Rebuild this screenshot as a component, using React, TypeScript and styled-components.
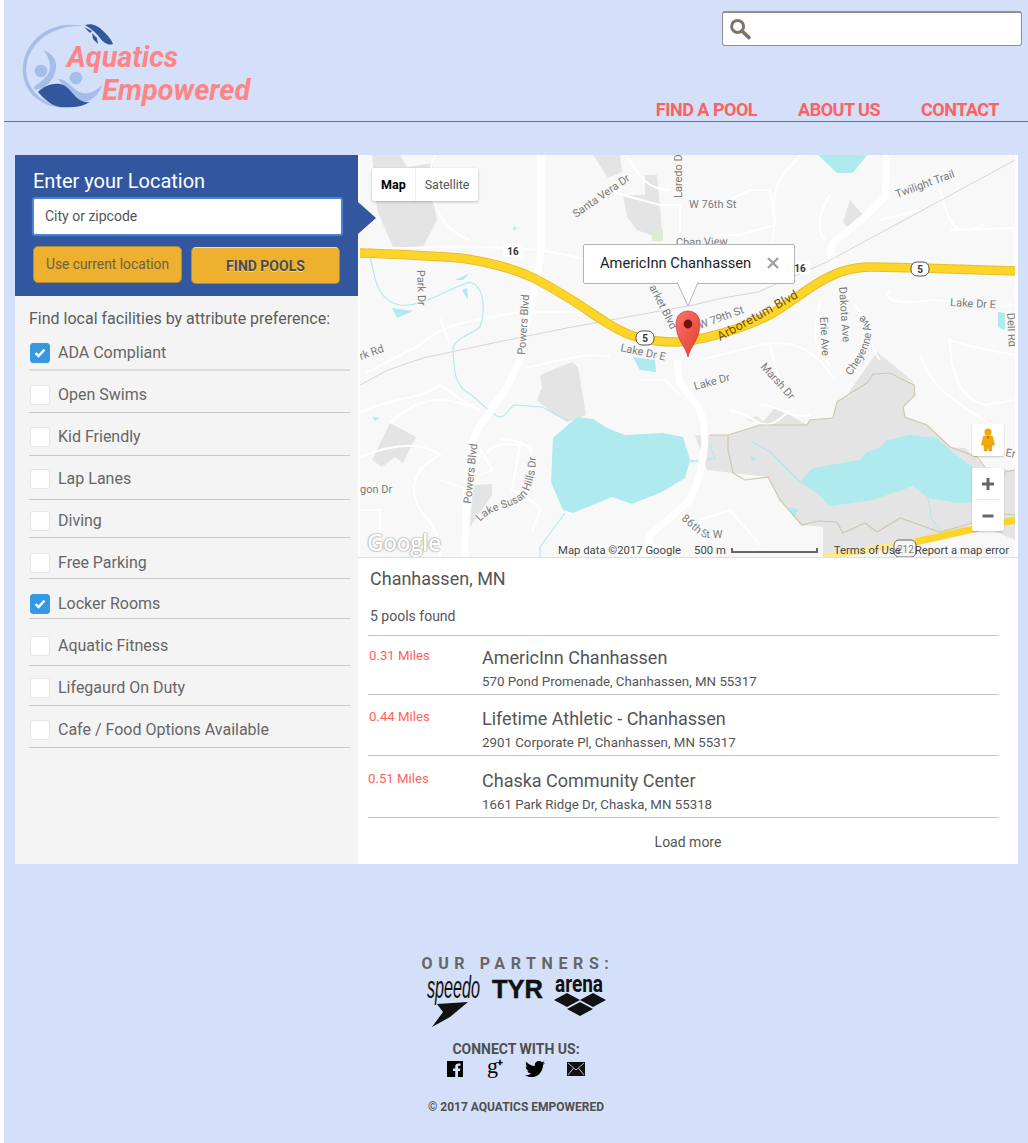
import styled, { createGlobalStyle } from 'styled-components';
import { FaTwitter } from 'react-icons/fa';

const GlobalStyle = createGlobalStyle`
  html, body {
    margin: 0;
    padding: 0;
    background: #fff;
    font-family: Roboto, "Liberation Sans", sans-serif;
  }
  * { box-sizing: border-box; }
`;

const Page = styled.div`
  margin-left: 4px;
  height: 1143px;
  overflow: hidden;
  background: #d4e0f9;
`;

const Header = styled.header`
  height: 122px;
  display: flex;
  justify-content: space-between;
  border-bottom: 1px solid #5673b4;
`;

const LogoBox = styled.svg`
  display: block;
  width: 240px;
  height: 90px;
  margin: 20px 0 0 14px;
`;

const LogoText = styled.text`
  font-family: Roboto, sans-serif;
  font-weight: 700;
  font-style: italic;
  font-size: 28.9px;
  fill: #ff8585;
`;

const HeaderRight = styled.div`
  display: flex;
  flex-direction: column;
  align-items: flex-end;
  padding: 11px 6px 0 0;
`;

const SearchBox = styled.div`
  width: 300px;
  height: 35px;
  display: flex;
  align-items: center;
  padding-left: 6px;
  background: #fff;
  border: 1px solid #8f8f8f;
  border-top-width: 2px;
  border-radius: 3px;
`;

const Nav = styled.nav`
  display: flex;
  gap: 41px;
  margin: auto 23px 0 0;
  padding-bottom: 1px;
`;

const NavLink = styled.a`
  font-size: 18px;
  line-height: 21px;
  font-weight: 700;
  letter-spacing: -0.5px;
  color: #ff6160;
`;

const Main = styled.main`
  height: 709px;
  margin: 33px 10px 0 11px;
  display: grid;
  grid-template-columns: 343px 1fr;
`;

const Sidebar = styled.aside`
  display: flex;
  flex-direction: column;
  background: #f4f4f4;
`;

const LocationPanel = styled.div`
  position: relative;
  z-index: 2;
  height: 141px;
  padding: 14px 16px 0 18px;
  background: #32579e;

  &::after {
    content: '';
    position: absolute;
    left: 343px;
    top: 47px;
    border-left: 18px solid #32579e;
    border-top: 16px solid transparent;
    border-bottom: 16px solid transparent;
  }
`;

const PanelTitle = styled.div`
  font-size: 20px;
  line-height: 24px;
  color: #fff;
`;

const CityInput = styled.div`
  height: 37px;
  margin-top: 5px;
  padding: 0 0 2px 11px;
  display: flex;
  align-items: center;
  background: #fff;
  border: 1px solid #4b86d8;
  border-radius: 2px;
  box-shadow: 0 0 1px 1px rgba(90, 150, 235, 0.7);
  font-size: 14px;
  color: #555;
`;

const ButtonRow = styled.div`
  display: flex;
  gap: 9px;
  margin-top: 11px;
`;

const GoldButton = styled.button<{ $primary?: boolean }>`
  width: 149px;
  height: 37px;
  padding: 0 0 ${(p) => (p.$primary ? 0 : 2)}px;
  margin-top: ${(p) => (p.$primary ? 1 : 0)}px;
  font-family: inherit;
  background: #edb02f;
  border: 1px solid #b28a3c;
  border-top-color: ${(p) => (p.$primary ? '#f5dca0' : '#b28a3c')};
  border-radius: 5px;
  font-size: ${(p) => (p.$primary ? 14 : 13.8)}px;
  font-weight: ${(p) => (p.$primary ? 700 : 400)};
  color: ${(p) => (p.$primary ? '#4b4b4b' : '#6e6040')};
  text-shadow: ${(p) => (p.$primary ? '0 1px 0 rgba(255,255,255,.5)' : 'none')};
`;

const FilterPanel = styled.div`
  padding: 12px 8px 0 14px;
`;

const FilterHeading = styled.div`
  font-size: 16px;
  line-height: 21px;
  color: #5c5c5c;
`;

const FilterRow = styled.label<{ $height: number; $top: number; $heavy?: boolean }>`
  display: flex;
  align-items: flex-start;
  gap: 8px;
  height: ${(p) => p.$height}px;
  padding: ${(p) => p.$top}px 0 0 1px;
  border-bottom: ${(p) => (p.$heavy ? '2px solid #dcdcdc' : '1px solid #c9c9c9')};
  font-size: 16px;
  line-height: 20px;
  color: #666;
`;

const Check = styled.span<{ $on?: boolean }>`
  flex: none;
  width: 20px;
  height: 20px;
  display: flex;
  align-items: center;
  justify-content: center;
  background: ${(p) => (p.$on ? '#3498e3' : '#fff')};
  border: 1px solid ${(p) => (p.$on ? '#3498e3' : '#e6e6e6')};
  border-radius: 3px;
`;

const Content = styled.section`
  display: flex;
  flex-direction: column;
  background: #fff;
`;

const MapFrame = styled.div`
  position: relative;
  height: 403px;
  padding-left: 2px;
  border-bottom: 1px solid #d4e0f9;
  overflow: hidden;
`;

const MapArt = styled.svg`
  display: block;
  width: 655px;
  height: 402px;
`;

const MapLabel = styled.text<{ $size?: number; $dark?: boolean; $bold?: boolean }>`
  font-family: Roboto, sans-serif;
  font-size: ${(p) => p.$size ?? 11}px;
  font-weight: ${(p) => (p.$bold ? 700 : 400)};
  fill: ${(p) => (p.$dark ? '#7a5200' : p.$bold ? '#333' : '#7b7b7b')};
  paint-order: stroke;
  stroke: ${(p) => (p.$dark || p.$bold ? 'transparent' : '#f8f8f8')};
  stroke-width: 2px;
`;

const MapTypeControl = styled.div`
  position: absolute;
  left: 14px;
  top: 13px;
  height: 33px;
  display: flex;
  background: #fff;
  border-radius: 2px;
  box-shadow: 0 1px 3px rgba(0, 0, 0, 0.25);
`;

const MapTypeButton = styled.div<{ $active?: boolean }>`
  display: flex;
  align-items: center;
  padding: 0 9px;
  font-size: 12.5px;
  font-weight: ${(p) => (p.$active ? 700 : 400)};
  color: ${(p) => (p.$active ? '#000' : '#555')};
  border-right: ${(p) => (p.$active ? '1px solid #eee' : 'none')};
`;

const InfoWindow = styled.div`
  position: absolute;
  left: 225px;
  top: 89px;
  width: 212px;
  height: 40px;
  display: flex;
  align-items: center;
  justify-content: space-between;
  padding: 0 15px 3px 16px;
  background: #fff;
  border: 1px solid #b4b4b4;
  border-radius: 2px;
  font-size: 14.7px;
  color: #222;
`;

const InfoTail = styled.svg`
  position: absolute;
  left: 92px;
  top: 37px;
  width: 24px;
  height: 26px;
`;

const Pin = styled.svg`
  position: absolute;
  left: 317px;
  top: 155px;
  width: 26px;
  height: 48px;
`;

const MapTile = styled.div<{ $top: number; $height: number }>`
  position: absolute;
  left: 614px;
  top: ${(p) => p.$top}px;
  width: 32px;
  height: ${(p) => p.$height}px;
  display: flex;
  flex-direction: column;
  align-items: center;
  justify-content: center;
  background: #fff;
  border-radius: 2px;
  box-shadow: 0 1px 2px rgba(0, 0, 0, 0.2);
`;

const ZoomButton = styled.div<{ $divider?: boolean }>`
  flex: 1;
  align-self: stretch;
  margin: 0 5px;
  display: flex;
  align-items: center;
  justify-content: center;
  border-bottom: ${(p) => (p.$divider ? '1px solid #e6e6e6' : 'none')};
`;

const GoogleMark = styled.div`
  position: absolute;
  left: 9px;
  bottom: 0;
  font-family: "Open Sans", sans-serif;
  font-size: 23px;
  line-height: 30px;
  font-weight: 600;
  letter-spacing: -0.6px;
  color: #fff;
  text-shadow: 0 0 2px #8c8c8c, 0 0 1px #8c8c8c;
`;

const Attribution = styled.div`
  position: absolute;
  right: 9px;
  bottom: 0;
  height: 14px;
  padding-top: 1px;
  display: flex;
  align-items: center;
  font-size: 11.3px;
  line-height: 13px;
  color: #444;
`;

const AttributionText = styled.span<{ $gap?: number; $veil?: boolean }>`
  margin-right: ${(p) => p.$gap ?? 0}px;
  background: ${(p) => (p.$veil ? 'rgba(255,255,255,.6)' : 'transparent')};
  white-space: nowrap;
`;

const ScaleBar = styled.span`
  width: 87px;
  height: 5px;
  margin: 0 16px 0 5px;
  border: 2px solid #666;
  border-top: none;
`;

const ResultsPane = styled.div`
  flex: 1;
  padding: 0 19px 0 10px;
`;

const Place = styled.div`
  height: 44px;
  padding: 11px 0 0 2px;
  font-size: 18px;
  line-height: 20px;
  color: #555;
`;

const Found = styled.div`
  height: 34px;
  padding: 5px 0 0 2px;
  font-size: 14px;
  line-height: 18px;
  color: #555;
  border-bottom: 1px solid #c4c4c4;
`;

const ResultRow = styled.div<{ $top: number }>`
  display: grid;
  grid-template-columns: 114px 1fr;
  padding: ${(p) => p.$top}px 0 3px;
  border-bottom: 1px solid #c4c4c4;
`;

const Miles = styled.div<{ $shift: number }>`
  margin-left: ${(p) => p.$shift}px;
  font-size: 13.2px;
  line-height: 18px;
  color: #ff5f5f;
`;

const ResultName = styled.div`
  font-size: 18px;
  line-height: 22px;
  color: #555;
`;

const ResultAddress = styled.div`
  margin-top: 4px;
  font-size: 13.3px;
  line-height: 18px;
  color: #555;
`;

const LoadMore = styled.div`
  padding: 15px 0 0 9px;
  text-align: center;
  font-size: 14px;
  line-height: 18px;
  color: #555;
`;

const Footer = styled.footer`
  display: flex;
  flex-direction: column;
  align-items: center;
  padding-top: 90px;
`;

const PartnersTitle = styled.div`
  padding-left: 4px;
  font-size: 16px;
  line-height: 20px;
  font-weight: 700;
  letter-spacing: 5.6px;
  color: #666;
`;

const PartnerLogos = styled.svg`
  display: block;
  width: 186px;
  height: 54px;
  margin-top: 1px;
`;

const ConnectTitle = styled.div`
  margin-top: 11px;
  font-size: 14px;
  line-height: 18px;
  font-weight: 700;
  color: #4f4f4f;
`;

const SocialRow = styled.div`
  display: flex;
  align-items: center;
  gap: 22px;
  height: 24px;
  margin-top: -1px;
  color: #000;
`;

const GooglePlus = styled.span`
  width: 16px;
  margin: -6px 0 0 2px;
  font-family: "Liberation Serif", serif;
  font-size: 22px;
  line-height: 20px;
  white-space: nowrap;
`;

const PlusMark = styled.span`
  display: inline-block;
  margin-left: -1px;
  vertical-align: 7px;
  font-family: Roboto, sans-serif;
  font-weight: 700;
  font-size: 11px;
  line-height: 8px;
`;

const Copyright = styled.div`
  margin-top: 19px;
  font-size: 12px;
  line-height: 14px;
  font-weight: 700;
  color: #4f4f4f;
`;

const FILTERS = [
  { label: 'ADA Compliant', on: true, height: 42, top: 14, heavy: true },
  { label: 'Open Swims', on: false, height: 42, top: 14 },
  { label: 'Kid Friendly', on: false, height: 43, top: 14 },
  { label: 'Lap Lanes', on: false, height: 44, top: 13 },
  { label: 'Diving', on: false, height: 38, top: 11 },
  { label: 'Free Parking', on: false, height: 41, top: 15 },
  { label: 'Locker Rooms', on: true, height: 40, top: 15 },
  { label: 'Aquatic Fitness', on: false, height: 47, top: 17 },
  { label: 'Lifegaurd On Duty', on: false, height: 40, top: 12 },
  { label: 'Cafe / Food Options Available', on: false, height: 42, top: 14 },
];

const RESULTS = [
  { miles: '0.31 Miles', name: 'AmericInn Chanhassen', address: '570 Pond Promenade, Chanhassen, MN 55317', top: 11, shift: 1 },
  { miles: '0.44 Miles', name: 'Lifetime Athletic - Chanhassen', address: '2901 Corporate Pl, Chanhassen, MN 55317', top: 13, shift: 1 },
  { miles: '0.51 Miles', name: 'Chaska Community Center', address: '1661 Park Ridge Dr, Chaska, MN 55318', top: 14, shift: 0 },
];

const BUILDINGS = [
  'M377 210 L393 247 L423 247 L437 220 L432 193 L433 163 L407 167 L400 155 L372 155 Z',
  'M593 155 L620 155 L622 172 L608 178 Z',
  'M623 195 L645 195 L645 175 L657 175 L663 240 L637 230 L627 217 Z',
  'M850 200 L863 215 L848 228 L843 222 Z',
  'M540 375 L572 362 L578 367 L586 415 L568 422 L555 415 L537 400 L542 388 Z',
  'M390 423 L416 437 L403 463 L395 457 L382 467 L372 460 Z',
  'M473 485 L492 484 L492 495 L470 527 Z',
  'M847 395 L877 352 L915 383 L890 373 L873 374 L860 390 Z',
  'M747 420 L757 416 L767 425 Z',
];

const PONDS = [
  'M392 308 L413 311 L397 318 Z',
  'M455 280 L470 273 L463 280 Z',
  'M462 290 L467 288 L468 300 Z',
  'M633 357 L655 360 L656 372 L640 370 Z',
  'M818 155 L867 155 L853 173 L837 173 Z',
  'M998 312 L1005 313 L1005 330 L998 327 Z',
  'M372 417 L380 418 L375 421 Z',
  'M514 226 L517 229 L513 230 Z',
  'M577 417 L593 419 L607 428 L625 435 L663 433 L683 437 L690 460 L685 478 L662 492 L632 504 L612 497 L573 513 L563 510 L551 482 L553 438 Z',
  'M800 482 L813 468 L860 460 L867 452 L880 448 L887 440 L910 435 L937 438 L953 453 L973 467 L973 502 L957 503 L928 498 L913 486 L873 500 L830 506 L817 493 Z',
  'M790 507 L798 510 L795 516 L790 512 Z',
  'M750 456 L757 459 L752 462 Z',
];

const STREAMS = [
  'M370 257 C375 275 375 300 400 305 C420 308 445 290 470 282 C482 285 487 305 480 327 C470 335 452 340 453 350 C454 370 455 385 467 392 C480 400 490 415 500 417 C507 417 510 405 515 405 L542 407 L568 421',
  'M565 513 L540 547 L540 557',
  'M752 442 L770 452 L800 482',
  'M928 498 L932 520 L945 535',
  'M690 460 L698 462',
  'M710 445 L715 458 L690 462',
];

const MAJOR_ROADS = [
  'M541 155 L541 250 C540 270 530 300 520 360 L507 387 L477 430 C468 450 466 480 465 557',
  'M887 155 L885 197 L867 215 L833 243 L830 253 L840 273',
  'M677 360 L680 383 L698 407 C708 425 708 460 690 500 L650 535 L647 557',
];

const MINOR_ROADS = [
  'M360 250 C420 247 480 245 541 250 L600 262',
  'M575 215 C590 200 600 190 620 190 M604 190 L660 205 L680 205 L680 250',
  'M625 152 C640 180 650 190 670 190',
  'M435 155 C420 190 440 230 470 240',
  'M730 200 L750 190 L770 190 L775 225 L740 235 L715 235',
  'M800 155 C790 170 770 175 775 220 L770 265',
  'M830 195 C820 210 815 230 825 240',
  'M880 220 L920 210 M950 230 L1015 228 L1015 300 M940 190 C950 220 950 240 985 225',
  'M890 290 C880 300 900 305 930 300 C960 300 980 310 1015 305',
  'M855 305 C870 325 870 350 880 360 M820 300 C815 330 810 345 830 365',
  'M700 360 L760 345 C790 340 800 345 820 360 L835 380 M770 345 C775 370 780 385 790 400',
  'M610 357 C590 352 570 358 525 368 M640 380 L665 380 L680 395',
  'M366 373 L420 345 C440 325 470 320 520 312 L590 312 M440 318 L450 345',
  'M360 412 C400 395 420 400 440 385 L470 405 L477 405 M390 423 C420 395 445 395 480 410',
  'M360 457 C390 445 420 440 440 455 C410 470 410 490 420 510 C440 530 440 545 440 557',
  'M500 440 C510 437 530 445 532 452 M487 452 C500 440 510 445 520 445 L512 490 C520 495 535 500 540 510 L532 532',
  'M480 448 L492 470 L478 476 L480 448 M440 480 L470 490 M360 510 L380 510 L380 540',
  'M700 520 L730 510 L760 545 M690 520 L705 540 M730 410 C760 415 760 440 790 410',
  'M1015 355 C990 350 960 345 950 340 C950 370 960 400 985 405 L1015 400 M920 355 C930 385 950 400 1000 430',
  'M760 405 C780 405 790 420 810 415',
];

const RAIL = 'M1015 160 L923 210 L858 245 L827 262 L758 292 L723 298 L693 305 L567 328 L493 343 L423 358 L388 370 L360 385';

const HIGHWAY =
  'M358 253 C400 254 430 256 460 258 C490 262 510 268 527 275 C545 283 555 290 567 297 C585 308 597 317 607 323 C620 331 628 335 637 337 C650 341 665 342 677 342 C695 341 708 337 723 333 C745 327 760 320 773 313 C790 303 798 296 807 290 C820 281 830 276 840 272 C852 268 862 267 873 267 C890 267 905 268 920 268 C950 269 985 270 1015 271';

const PARK =
  'M695 435 L728 435 L760 425 L775 408 L790 415 L807 425 L810 420 L833 418 L837 402 L860 390 L873 374 L890 373 L914 385 L915 395 L903 407 L905 417 L927 425 L950 447 L965 448 L985 467 L1015 470 L1015 540 L975 523 L940 540 L823 557 L823 527 L802 525 L780 500 L768 477 L733 473 L707 470 Z';

const PARK_EDGE =
  'M710 435 L728 435 L760 425 L807 425 L810 420 L833 418 L837 402 L867 383 L873 374 L890 373 L914 385 L915 395 L903 407 L905 417 L927 425 L950 447 L977 457 L985 467 M1015 470 L1000 473 M1015 515 L990 513 L973 523 L940 532 L900 518 L877 532 L865 523 L843 533 L837 522 L818 521 L802 525 L780 500 L768 477 L745 480 L733 473 L728 450 L728 435';

const LABELS = [
  { text: 'Santa Vera Dr', x: 576, y: 218, r: -35 },
  { text: 'Laredo Dr', x: 682, y: 198, r: -90 },
  { text: 'W 76th St', x: 689, y: 208, r: 0 },
  { text: 'Chan View', x: 676, y: 246, r: -1 },
  { text: 'Twilight Trail', x: 897, y: 198, r: -20 },
  { text: 'Park Dr', x: 417, y: 270, r: 88 },
  { text: 'Powers Blvd', x: 525, y: 355, r: -86 },
  { text: 'rk Rd', x: 361, y: 360, r: -20 },
  { text: 'Lake Dr E', x: 620, y: 351, r: 12 },
  { text: 'arket Blvd', x: 649, y: 287, r: 63 },
  { text: 'W 79th St', x: 700, y: 329, r: -20 },
  { text: 'Dakota Ave', x: 839, y: 287, r: 86 },
  { text: 'Erie Ave', x: 820, y: 317, r: 87 },
  { text: 'Lake Dr E', x: 950, y: 306, r: 3 },
  { text: 'Dell Rd', x: 1007, y: 313, r: 87 },
  { text: 'Lake Dr', x: 695, y: 390, r: -15 },
  { text: 'Marsh Dr', x: 760, y: 367, r: 48 },
  { text: 'Er', x: 1005, y: 456, r: 10 },
  { text: 'Powers Blvd', x: 471, y: 504, r: -84 },
  { text: 'gon Dr', x: 360, y: 493, r: 0 },
];

const CURVED_LABELS = [
  { id: 'cheyenne', text: 'Cheyenne Ave', d: 'M851 376 C862 360 872 345 871 330 C870 320 862 312 852 310' },
  { id: 'susan', text: 'Lake Susan Hills Dr', d: 'M480 522 C495 505 515 510 527 495 C533 485 536 470 536 455' },
  { id: 'eightysixth', text: '86th St W', d: 'M681 520 C690 525 698 538 708 538 L735 538' },
];

const ROUTE_BADGES = [
  { label: '16', x: 503, y: 244, width: 20, round: 0 },
  { label: '16', x: 790, y: 261, width: 20, round: 0 },
  { label: '5', x: 636, y: 331, width: 18, round: 6 },
  { label: '5', x: 911, y: 262, width: 18, round: 6 },
];

function SearchIcon() {
  return (
    <svg width="22" height="22" viewBox="0 0 22 22">
      <circle cx="8.6" cy="8.4" r="6" fill="none" stroke="#81726f" strokeWidth="3" />
      <path d="M13 13 L20 19.6" stroke="#81726f" strokeWidth="3.6" strokeLinecap="round" />
    </svg>
  );
}

function CheckMark() {
  return (
    <svg width="12" height="10" viewBox="0 0 12 10">
      <path d="M1.5 5.2 L4.5 8 L10.5 1.6" fill="none" stroke="#fff" strokeWidth="2.4" />
    </svg>
  );
}

function Logo() {
  return (
    <LogoBox viewBox="18 20 240 90">
      <path d="M83 26 C65 22 45 27 33 42 C18 60 20 85 36 98 C43 104 53 107 63 108 C50 104 40 100 33 90 C22 75 25 57 37 43 C48 31 65 25 83 26 Z" fill="#a4bdea" />
      <path d="M85 25 C92 23 98 26 102 30 C108 35 112 41 113 44 C108 46 103 42 100 38 C97 34 92 29 85 25 Z M84 27 L92 31 L90 33 Z M92 33 L97 38 L98 44 L93 39 Z" fill="#32579e" />
      <path d="M43 50 C52 53 57 60 56 68 C55 76 51 83 43 88 L35 90 C33 88 34 87 36 85 C42 81 49 76 50 68 C50 60 47 54 43 50 Z" fill="#a4bdea" />
      <circle cx="41" cy="71" r="6.3" fill="#a4bdea" />
      <circle cx="76" cy="78" r="6.3" fill="#a4bdea" />
      <path d="M58 79 C64 78 70 85 76 90 C83 95 92 95 102 85 C100 92 94 100 85 102 C76 103 70 95 66 90 C63 85 60 82 58 79 Z" fill="#a4bdea" />
      <path d="M38 92 C44 86 52 83 60 84 C67 85 71 92 76 97 C80 101 85 103 90 102 C82 107 70 108 60 107 C52 106 44 99 38 92 Z" fill="#32579e" />
      <LogoText x="67" y="67">Aquatics</LogoText>
      <LogoText x="102" y="100">Empowered</LogoText>
    </LogoBox>
  );
}

function MapPicture() {
  return (
    <MapArt viewBox="360 155 655 402">
      <rect x="358" y="155" width="657" height="402" fill="#f8f8f8" />
      {BUILDINGS.map((d) => <path key={d} d={d} fill="#e4e4e4" />)}
      <rect x="652" y="230" width="11" height="11" fill="#dcebd2" />
      <path d={PARK} fill="#e4e4e4" />
      {MINOR_ROADS.map((d) => <path key={d} d={d} fill="none" stroke="#fff" strokeWidth="2" />)}
      {STREAMS.map((d) => <path key={d} d={d} fill="none" stroke="#aeeaee" strokeWidth="1.1" />)}
      {PONDS.map((d) => <path key={d} d={d} fill="#aeeaee" />)}
      <path d={PARK_EDGE} fill="none" stroke="#cdc8ae" strokeWidth="1.2" />
      {MAJOR_ROADS.map((d) => <path key={d} d={d} fill="none" stroke="#fff" strokeWidth="7" />)}
      <path d={RAIL} fill="none" stroke="#d6d6d6" strokeWidth="1" />
      <path d="M915 542 L1015 520" stroke="#fdd528" strokeWidth="7" />
      <path d="M823 557 L915 542" stroke="#fbe89b" strokeWidth="7" />
      <rect x="894" y="540" width="22" height="17" rx="5" fill="#f5f5f5" stroke="#666" strokeWidth="1" />
      <MapLabel x="897" y="553" $size={10}>212</MapLabel>
      <path d={HIGHWAY} fill="none" stroke="#e8bd2c" strokeWidth="9.5" />
      <path d={HIGHWAY} fill="none" stroke="#fdd528" strokeWidth="7.5" />
      {ROUTE_BADGES.map((b) => (
        <g key={b.x}>
          <rect x={b.x} y={b.y} width={b.width} height={b.round ? 14 : 13} rx={b.round} fill="#fff" stroke={b.round ? '#555' : 'none'} />
          <MapLabel x={b.x + b.width / 2} y={b.y + 11} textAnchor="middle" $size={10} $bold>{b.label}</MapLabel>
        </g>
      ))}
      {LABELS.map((l) => (
        <MapLabel key={l.text + l.x} x={l.x} y={l.y} transform={`rotate(${l.r} ${l.x} ${l.y})`}>{l.text}</MapLabel>
      ))}
      {CURVED_LABELS.map((l) => (
        <g key={l.id}>
          <path id={l.id} d={l.d} fill="none" />
          <MapLabel><textPath href={`#${l.id}`}>{l.text}</textPath></MapLabel>
        </g>
      ))}
      <MapLabel x="720" y="341" $size={12.5} $dark transform="rotate(-29 720 341)" letterSpacing="0.3">Arboretum Blvd</MapLabel>
    </MapArt>
  );
}

function Speedo() {
  return (
    <>
      <text x="4" y="23" fontFamily="Liberation Sans, sans-serif" fontStyle="italic" fontSize="32" textLength="53" lengthAdjust="spacingAndGlyphs" fill="#111">speedo</text>
      <path d="M14 29 L45 27 L27 42 L9 52 L20 37 Z" fill="#111" />
    </>
  );
}

function Tyr() {
  return (
    <text x="69" y="23" fontFamily="Liberation Sans, sans-serif" fontWeight="700" fontSize="26.5" textLength="51" lengthAdjust="spacingAndGlyphs" fill="#111" stroke="#111" strokeWidth="0.5">TYR</text>
  );
}

function Arena() {
  return (
    <>
      <text x="132" y="17" fontFamily="Roboto, sans-serif" fontWeight="700" fontSize="24" textLength="48" lengthAdjust="spacingAndGlyphs" fill="#111">arena</text>
      <path d="M131 25 L144 18 L157 25 L144 32 Z M157 25 L170 18 L183 25 L170 32 Z M144 34 L157 27 L170 34 L157 41 Z" fill="#111" />
    </>
  );
}

function FacebookIcon() {
  return (
    <svg width="16" height="16" viewBox="0 0 16 16">
      <rect width="16" height="16" fill="#000" />
      <path d="M11 16 V10 H13 L13.4 7.5 H11 V6 C11 5.2 11.4 4.8 12.2 4.8 H13.5 V2.6 C13 2.5 12.2 2.4 11.4 2.4 C9.4 2.4 8.2 3.6 8.2 5.6 V7.5 H6 V10 H8.2 V16 Z" fill="#d4e0f9" />
    </svg>
  );
}

function MailIcon() {
  return (
    <svg width="18" height="14" viewBox="0 0 18 14">
      <rect width="18" height="14" fill="#111" />
      <path d="M1 1 L9 8 L17 1 M1 13 L6.6 6 M17 13 L11.4 6" fill="none" stroke="#d4e0f9" strokeWidth="0.8" />
    </svg>
  );
}

export default function App() {
  return (
    <>
      <GlobalStyle />
      <Page>
        <Header>
          <Logo />
          <HeaderRight>
            <SearchBox><SearchIcon /></SearchBox>
            <Nav>
              <NavLink>FIND A POOL</NavLink>
              <NavLink>ABOUT US</NavLink>
              <NavLink>CONTACT</NavLink>
            </Nav>
          </HeaderRight>
        </Header>

        <Main>
          <Sidebar>
            <LocationPanel>
              <PanelTitle>Enter your Location</PanelTitle>
              <CityInput>City or zipcode</CityInput>
              <ButtonRow>
                <GoldButton>Use current location</GoldButton>
                <GoldButton $primary>FIND POOLS</GoldButton>
              </ButtonRow>
            </LocationPanel>
            <FilterPanel>
              <FilterHeading>Find local facilities by attribute preference:</FilterHeading>
              {FILTERS.map((f) => (
                <FilterRow key={f.label} $height={f.height} $top={f.top} $heavy={f.heavy}>
                  <Check $on={f.on}>{f.on && <CheckMark />}</Check>
                  {f.label}
                </FilterRow>
              ))}
            </FilterPanel>
          </Sidebar>

          <Content>
            <MapFrame>
              <MapPicture />
              <MapTypeControl>
                <MapTypeButton $active>Map</MapTypeButton>
                <MapTypeButton>Satellite</MapTypeButton>
              </MapTypeControl>
              <InfoWindow>
                <span>AmericInn Chanhassen</span>
                <svg width="12" height="12" viewBox="0 0 12 12">
                  <path d="M1 1 L11 11 M11 1 L1 11" stroke="#a0a0a0" strokeWidth="2.4" />
                </svg>
                <InfoTail viewBox="0 0 24 26">
                  <path d="M1 0 L12 24 L22 0" fill="#fff" stroke="#b4b4b4" strokeWidth="1" />
                </InfoTail>
              </InfoWindow>
              <Pin viewBox="0 0 26 48">
                <defs>
                  <linearGradient id="pinFill" x1="0" y1="0" x2="1" y2="1">
                    <stop offset="0" stopColor="#fb7468" />
                    <stop offset="1" stopColor="#e23c32" />
                  </linearGradient>
                </defs>
                <path d="M13 47 C11 37 1 29 1 14 C1 6 6 1 13 1 C20 1 25 6 25 14 C25 29 15 37 13 47 Z" fill="url(#pinFill)" stroke="#b5302a" strokeWidth="0.6" />
                <circle cx="13" cy="14" r="4.4" fill="#6f1210" />
              </Pin>
              <MapTile $top={269} $height={32}>
                <svg width="14" height="24" viewBox="0 0 14 24">
                  <circle cx="7" cy="4" r="3.6" fill="#f3a900" />
                  <path d="M2.5 8.5 C4 7.5 10 7.5 11.5 8.5 L13.5 17 L11 17 L10.5 23 L8 23 L7 17 L6 23 L3.5 23 L3 17 L0.5 17 Z" fill="#f3a900" stroke="#c98a00" strokeWidth="0.5" />
                  <path d="M6 8.5 L7 11 L8 8.5 Z" fill="#c8401f" />
                </svg>
              </MapTile>
              <MapTile $top={313} $height={63}>
                <ZoomButton $divider>
                  <svg width="14" height="14" viewBox="0 0 14 14"><path d="M1 7 H13 M7 1 V13" stroke="#666" strokeWidth="3" /></svg>
                </ZoomButton>
                <ZoomButton>
                  <svg width="14" height="14" viewBox="0 0 14 14"><path d="M1.5 7 H12.5" stroke="#666" strokeWidth="3" /></svg>
                </ZoomButton>
              </MapTile>
              <GoogleMark>Google</GoogleMark>
              <Attribution>
                <AttributionText $gap={13} $veil>Map data ©2017 Google</AttributionText>
                <AttributionText>500 m</AttributionText>
                <ScaleBar />
                <AttributionText $gap={14}>Terms of Use</AttributionText>
                <AttributionText>Report a map error</AttributionText>
              </Attribution>
            </MapFrame>

            <ResultsPane>
              <Place>Chanhassen, MN</Place>
              <Found>5 pools found</Found>
              {RESULTS.map((r) => (
                <ResultRow key={r.name} $top={r.top}>
                  <Miles $shift={r.shift}>{r.miles}</Miles>
                  <div>
                    <ResultName>{r.name}</ResultName>
                    <ResultAddress>{r.address}</ResultAddress>
                  </div>
                </ResultRow>
              ))}
              <LoadMore>Load more</LoadMore>
            </ResultsPane>
          </Content>
        </Main>

        <Footer>
          <PartnersTitle>OUR PARTNERS:</PartnersTitle>
          <PartnerLogos viewBox="0 0 186 54">
            <Speedo />
            <Tyr />
            <Arena />
          </PartnerLogos>
          <ConnectTitle>CONNECT WITH US:</ConnectTitle>
          <SocialRow>
            <FacebookIcon />
            <GooglePlus>g<PlusMark>+</PlusMark></GooglePlus>
            <FaTwitter size={20} />
            <MailIcon />
          </SocialRow>
          <Copyright>© 2017 AQUATICS EMPOWERED</Copyright>
        </Footer>
      </Page>
    </>
  );
}
